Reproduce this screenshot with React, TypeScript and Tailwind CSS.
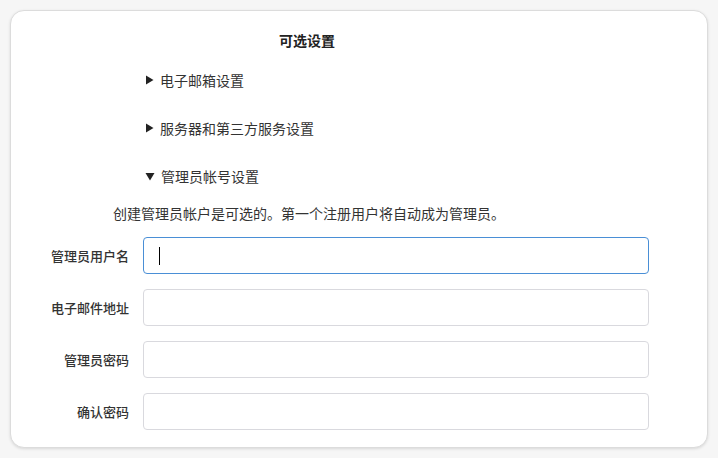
import React from "react";

const fields = ["管理员用户名", "电子邮件地址", "管理员密码", "确认密码"];

const Arrow = ({ open }: { open: boolean }) =>
  open ? (
    <svg width="10" height="9" viewBox="0 0 10 9" className="shrink-0">
      <path d="M0.5 1 L9.5 1 L5 8.5 Z" fill="#222" />
    </svg>
  ) : (
    <svg width="9" height="10" viewBox="0 0 9 10" className="shrink-0">
      <path d="M1 0.5 L8.5 5 L1 9.5 Z" fill="#222" />
    </svg>
  );

const Summary = ({ text, open }: { text: string; open: boolean }) => (
  <div className="flex items-center gap-[6px] h-[20px] pl-[134px] text-[14px] text-[#333]">
    <Arrow open={open} />
    <span>{text}</span>
  </div>
);

export default function App() {
  return (
    <div
      className="w-[718px] h-[458px] bg-[#f6f6f6] p-[10px]"
      style={{ fontFamily: '"Noto Sans CJK SC", "Noto Sans", sans-serif' }}
    >
      <div className="w-[698px] h-[438px] bg-white rounded-[14px] border border-[#dcdcdc] shadow-[0_1px_3px_rgba(0,0,0,0.12)] pt-[19px]">
        <div className="pl-[268px] h-[20px] flex items-center text-[14px] font-bold text-[#222]">
          可选设置
        </div>
        <div className="mt-[20px] flex flex-col gap-[28px]">
          <Summary text="电子邮箱设置" open={false} />
          <Summary text="服务器和第三方服务设置" open={false} />
          <Summary text="管理员帐号设置" open={true} />
        </div>
        <p className="mt-[17px] pl-[102px] h-[20px] flex items-center text-[14px] text-[#333]">
          创建管理员帐户是可选的。第一个注册用户将自动成为管理员。
        </p>
        <div className="mt-[14px] flex flex-col gap-[15px]">
          {fields.map((label, i) => (
            <div key={label} className="flex items-center">
              <label className="w-[118px] text-right text-[13px] font-medium text-[#333]">
                {label}
              </label>
              <div
                className={
                  i === 0
                    ? "relative ml-[14px] w-[506px] h-[37px] rounded-[4px] border border-[#4a8fd6]"
                    : "relative ml-[14px] w-[506px] h-[37px] rounded-[4px] border border-[#d9d9de]"
                }
              >
                {i === 0 && (
                  <span className="absolute left-[15px] top-[9px] w-[1px] h-[18px] bg-[#000]" />
                )}
              </div>
            </div>
          ))}
        </div>
      </div>
    </div>
  );
}
